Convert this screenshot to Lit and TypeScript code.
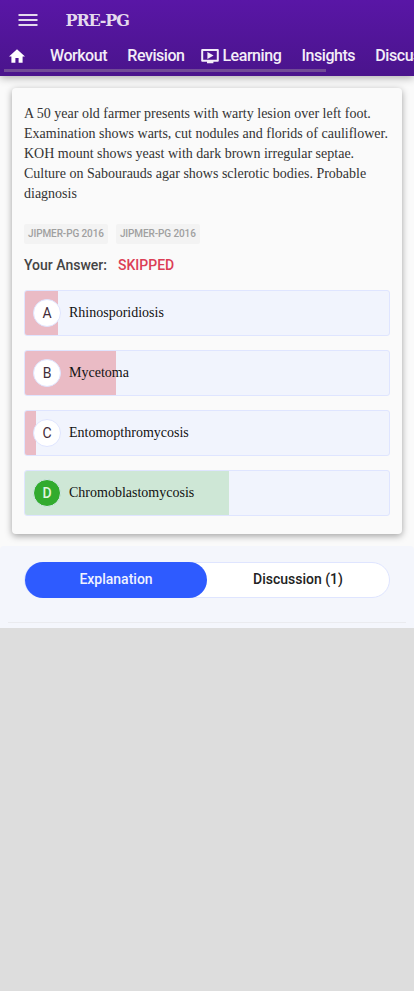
import { LitElement, html, css, svg, nothing } from "lit";
import { customElement, property } from "lit/decorators.js";
import { classMap } from "lit/directives/class-map.js";

@customElement("answer-option")
class AnswerOption extends LitElement {
  @property() letter = "";
  @property() label = "";
  @property({ type: Number }) share = 0;
  @property({ type: Boolean }) correct = false;

  static styles = css`
    :host { display: block; }
    .option {
      position: relative; box-sizing: border-box; height: 46px; display: flex; align-items: center;
      padding-left: 8px; border: 1px solid #dfe5ff; border-radius: 3px; background: #f1f4fd; overflow: hidden;
    }
    .bar { position: absolute; left: 0; top: 0; bottom: 0; background: #eabbc5; }
    .correct .bar { background: #cee7d6; }
    .letter {
      position: relative; box-sizing: border-box; width: 28px; height: 28px; border: 1px solid #dfe5ff;
      border-radius: 50%; background: #fff; color: #412c38; font: 14px/27px Roboto, sans-serif; text-align: center;
    }
    .correct .letter { background: #32ab2e; color: #e0f5df; font-weight: 500; border-color: #d5e8ea; }
    .label { position: relative; margin-left: 8px; color: #111; font: 14px/20px "Liberation Serif", serif; white-space: nowrap; }
  `;

  render() {
    return html`<div class=${classMap({ option: true, correct: this.correct })}>
      <div class="bar" style="width:${this.share}px"></div>
      <div class="letter">${this.letter}</div>
      <div class="label">${this.label}</div>
    </div>`;
  }
}

const videoIcon = svg`<svg class="video" viewBox="0 0 18 16" width="18" height="16">
  <path d="M1.2 2h15.6v10.8H1.2z" fill="none" stroke="currentColor" stroke-width="2" stroke-linejoin="round"/>
  <path d="M6.4 3.9v7L12.6 7.4zM6 12.5h6.4v2.7H6z" fill="currentColor"/></svg>`;

@customElement("app-root")
class AppRoot extends LitElement {
  static styles = css`
    :host { display: block; min-height: 991px; background: #ddd; font-family: Roboto, sans-serif; overflow: hidden; }
    header {
      position: relative; box-sizing: border-box; height: 76px; background: linear-gradient(#5916a6, #4a148c);
      color: #f3edf8; box-shadow: 0 2px 8px rgba(0, 0, 0, 0.3); overflow: visible;
    }
    .top { display: flex; align-items: center; height: 40px; padding-left: 18px; }
    .menu { display: block; color: #e4daed; }
    .brand { margin-left: 27.5px; padding-top: 2px; font: bold 16px/20px "DejaVu Serif", serif; letter-spacing: -1.15px; color: #e4daed; }
    nav { display: flex; height: 32px; align-items: center; overflow: hidden; padding-left: 9px; font-size: 16px; font-weight: 500; letter-spacing: -0.45px; white-space: nowrap; }
    .home { display: block; flex: none; margin-right: 25px; color: #fff; }
    .tab { flex: none; display: flex; align-items: center; margin-right: 20.2px; line-height: 20px; padding-bottom: 1px; }
    .beforeIcon { margin-right: 16.3px; }
    .video { margin-right: 3.6px; }
    .thumb { position: absolute; left: 4px; top: 69px; width: 322px; height: 3px; background: #714b96; }
    main { background: #fafafa; padding: 12px 12px 12px; }
    .card { box-sizing: border-box; height: 446px; padding: 16px 12px 0; background: #fafafa; border-radius: 4px; box-shadow: 0 2px 7px rgba(0, 0, 0, 0.36); }
    .question { font: 14px/20px "Liberation Serif", serif; color: #333; white-space: nowrap; }
    .line { display: block; width: max-content; }
    .tags { display: flex; gap: 8px; margin-top: 20px; }
    .tag { height: 20px; padding: 0 4px; border-radius: 2px; background: #f3f3f3; color: #a0a0a0; font: 500 10px/20px Roboto, sans-serif; letter-spacing: -0.1px; white-space: nowrap; }
    .answer { display: flex; margin-top: 11px; font-size: 14px; line-height: 20px; font-weight: 500; color: #444; white-space: nowrap; }
    .skipped { margin-left: 11px; color: #dc3e56; }
    .options { display: flex; flex-direction: column; gap: 14px; margin-top: 15px; }
    .panel { box-sizing: border-box; height: 82px; padding: 16px 24px 0; background: #f4f6fc; border-radius: 4px 4px 0 0; }
    .wrap { background: #fafafa; }
    .switch { box-sizing: border-box; height: 36px; border: 1px solid #dfe5ff; border-radius: 18px; background: #fff; display: flex; }
    .choice { flex: 1; margin: -1px 0; border-radius: 18px; font: 500 14px/35px Roboto, sans-serif; text-align: center; color: #222; white-space: nowrap; }
    .active { background: #2e5bff; color: #eff2ff; }
    .rule { height: 1px; background: #eaebef; margin: 24px -16px 0; }
  `;

  private lines = [
    "A 50 year old farmer presents with warty lesion over left foot.",
    "Examination shows warts, cut nodules and florids of cauliflower.",
    "KOH mount shows yeast with dark brown irregular septae.",
    "Culture on Sabourauds agar shows sclerotic bodies. Probable",
    "diagnosis",
  ];

  private options = [
    { letter: "A", label: "Rhinosporidiosis", share: 33, correct: false },
    { letter: "B", label: "Mycetoma", share: 91, correct: false },
    { letter: "C", label: "Entomopthromycosis", share: 11, correct: false },
    { letter: "D", label: "Chromoblastomycosis", share: 204, correct: true },
  ];

  private tabs = ["Workout", "Revision", "Learning", "Insights", "Discussion"];

  render() {
    return html`
      <header>
        <div class="top">
          <svg class="menu" viewBox="0 0 20 14" width="20" height="14"><path d="M.5 2h19M.5 7h19M.5 12h19" stroke="currentColor" stroke-width="2"/></svg>
          <span class="brand">PRE-PG</span>
        </div>
        <nav>
          <svg class="home" viewBox="2 3 20 17" width="16" height="14"><path d="M10 20v-6h4v6h5v-8h3L12 3 2 12h3v8z" fill="currentColor"/></svg>
          ${this.tabs.map((t) => html`<span class=${classMap({ tab: true, beforeIcon: t === "Revision" })}>${t === "Learning" ? videoIcon : nothing}${t}</span>`)}
        </nav>
        <div class="thumb"></div>
      </header>
      <main>
        <section class="card">
          <div class="question">${this.lines.map((l) => html`<span class="line">${l}</span>`)}</div>
          <div class="tags"><span class="tag">JIPMER-PG 2016</span><span class="tag">JIPMER-PG 2016</span></div>
          <div class="answer"><span>Your Answer:</span><span class="skipped">SKIPPED</span></div>
          <div class="options">
            ${this.options.map((o) => html`<answer-option .letter=${o.letter} .label=${o.label} .share=${o.share} .correct=${o.correct}></answer-option>`)}
          </div>
        </section>
      </main>
      <div class="wrap"><section class="panel">
        <div class="switch"><div class="choice active">Explanation</div><div class="choice">Discussion (1)</div></div>
        <div class="rule"></div>
      </section></div>
    `;
  }
}
